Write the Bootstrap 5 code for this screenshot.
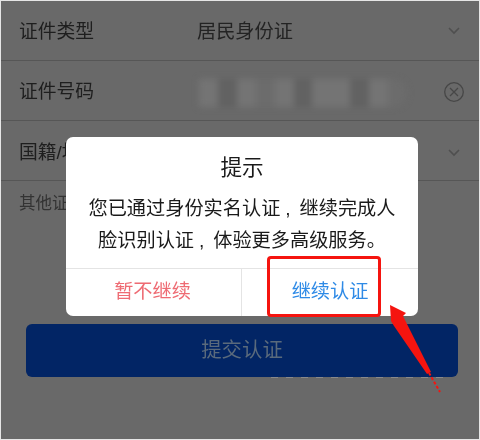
<!DOCTYPE html>
<html lang="zh">
<head>
<meta charset="utf-8">
<title>提交认证</title>
<link rel="stylesheet" href="https://cdn.jsdelivr.net/npm/bootstrap@5.3.0/dist/css/bootstrap.min.css">
<style>
html,body{margin:0;height:440px;overflow:hidden}
body{font-family:"Liberation Sans","Noto Sans CJK SC",sans-serif;background:#e6e6e6;}
.scr{position:relative;width:478px;height:438px;margin:1px;background:#696969;color:#1e1e1e;overflow:hidden;filter:blur(.4px)}
.frow{height:60px;border-bottom:1px solid #565656;padding:3px 0 0 18px;font-size:18.8px;line-height:1}
.frow2{padding-top:4px}
.frow3{padding-top:6px}
.flab{width:178px;flex:none}
.fval{flex:1;color:#232323;font-size:19.2px}
.ico{flex:none;width:26px;margin-right:12px}
.hint{font-size:16.5px;color:#333;padding:10px 0 0 18px;line-height:24px}
.blurbox{width:208px;height:28px;display:flex;filter:blur(3px);margin-left:2px;border-radius:0 14px 14px 0;overflow:hidden}
.blurbox i{flex:1;background:#747474}
.blurbox i.d{background:#626262}
.blurbox i.g{background:#6c6c6c}
.sub{position:relative;margin:109px 21px 0 25px;height:53px;background:#022565;border-radius:6px;color:#5a6a7c;font-size:20.4px}
.sub::after{content:"";position:absolute;left:245px;right:12px;bottom:-1px;height:1px;background:repeating-linear-gradient(90deg,#8a8a8a 0 7px,transparent 7px 15px)}
.dlg{position:absolute;left:65px;top:136px;width:352px;height:179px;background:#fff;border-radius:7px;color:#1a1a1a}
.dtitle{font-size:21.6px;line-height:26px;padding-top:18px;text-align:center}
.dbody{font-size:19.2px;line-height:32px;padding:12px 0 0;height:90px;text-align:center;white-space:nowrap}
.cma{display:inline-block;width:1em;text-align:center;padding-right:4px}
.dbtns{height:50px;border-top:1px solid #e4e4e4}
.dbtn{font-size:19.2px}
.dno{flex:none;width:176px;color:#ee6b73;border-right:1px solid #e4e4e4;padding-right:2px}
.dyes{flex:1;color:#2e8ae6}
.redbox{position:absolute;left:266px;top:255px;width:114px;height:61px;border:3px solid #f5140f;border-radius:4px}
.arrow{position:absolute;left:380px;top:295px}
</style>
</head>
<body>
<div class="scr">
  <div class="frow d-flex align-items-center"><span class="flab">证件类型</span><span class="fval">居民身份证</span>
    <svg class="ico" width="26" height="12" viewBox="0 0 26 12"><path d="M8 2l5 5 5-5" fill="none" stroke="#4f4f4f" stroke-width="1.6"/></svg></div>
  <div class="frow frow2 d-flex align-items-center"><span class="flab">证件号码</span>
    <span class="fval"><span class="blurbox"><i></i><i class="d"></i><i></i><i class="g"></i><i></i><i class="d"></i><i></i><i></i><i class="d"></i><i></i><i class="g"></i></span></span>
    <svg class="ico" width="26" height="22" viewBox="0 0 26 22"><circle cx="13" cy="10" r="9.3" fill="none" stroke="#474747" stroke-width="1.3"/><path d="M9 6l8 8M17 6l-8 8" stroke="#474747" stroke-width="1.3"/></svg></div>
  <div class="frow frow3 d-flex align-items-center"><span class="flab">国籍/地区</span><span class="fval"></span>
    <svg class="ico" width="26" height="12" viewBox="0 0 26 12"><path d="M8 2l5 5 5-5" fill="none" stroke="#4f4f4f" stroke-width="1.6"/></svg></div>
  <div class="hint">其他证件</div>
  <div class="sub d-flex align-items-center justify-content-center">提交认证</div>

  <div class="dlg d-flex flex-column">
    <div class="dtitle">提示</div>
    <div class="dbody">您已通过身份实名认证<span class="cma">,</span>继续完成人<br>脸识别认证<span class="cma">,</span>体验更多高级服务。</div>
    <div class="dbtns d-flex">
      <div class="dbtn dno d-flex align-items-center justify-content-center">暂不继续</div>
      <div class="dbtn dyes d-flex align-items-center justify-content-center">继续认证</div>
    </div>
  </div>
  <div class="redbox"></div>
  <svg class="arrow" width="70" height="110" viewBox="0 0 70 110"><path d="M9 9L25 17 22 20 50 76 46 78 13 30 10 25Z" fill="#f5140f"/><path d="M48 77L59 96" stroke="#f5140f" stroke-width="2" stroke-dasharray="3 2" fill="none"/></svg>
</div>
<script src="https://cdn.jsdelivr.net/npm/bootstrap@5.3.0/dist/js/bootstrap.bundle.min.js"></script>
</body>
</html>
